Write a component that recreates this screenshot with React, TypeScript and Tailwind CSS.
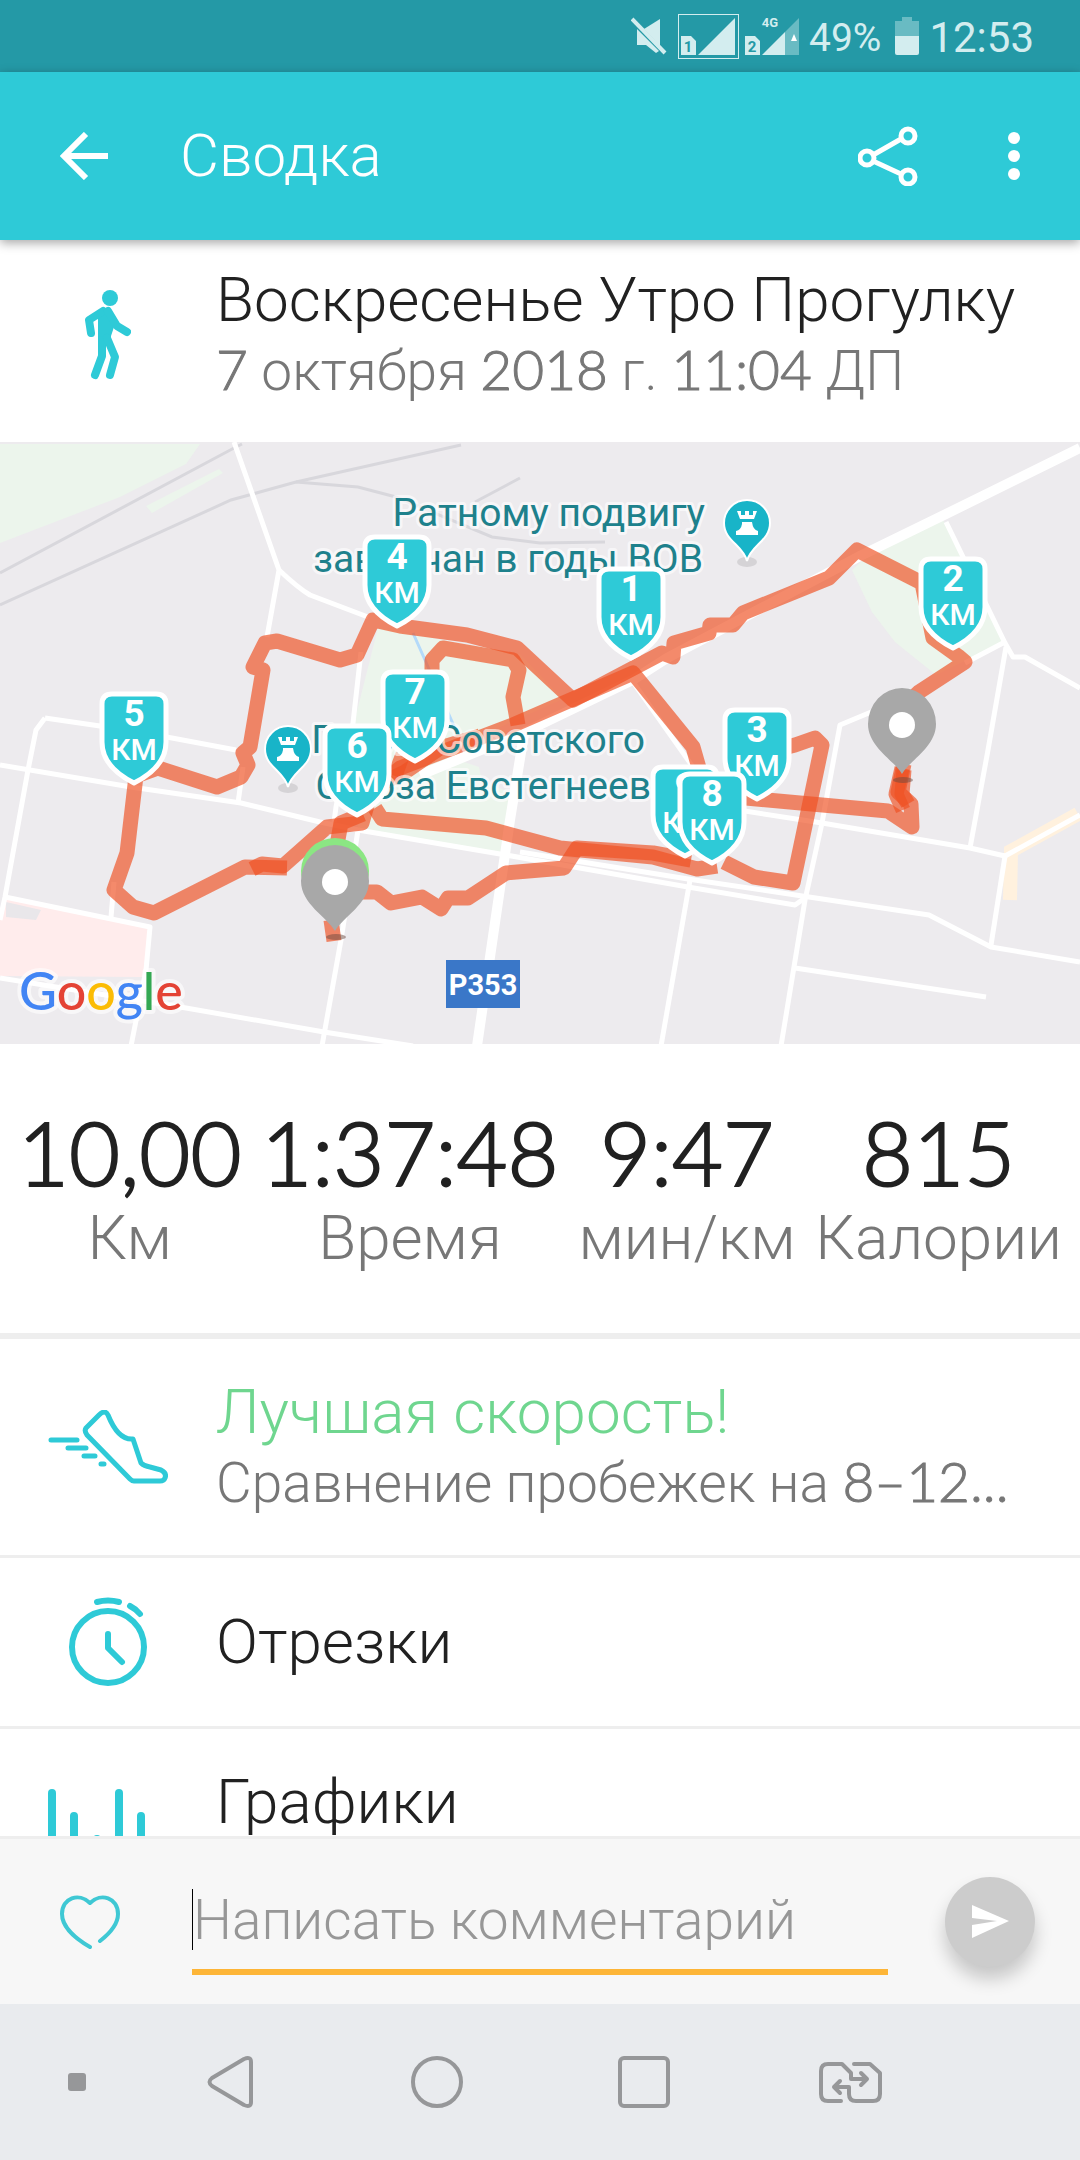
import { ReactNode } from "react";

type Marker = { label: string; x: number; y: number };

// Order matters: later shields are drawn over earlier ones
const KM_MARKERS: Marker[] = [
  { label: "1", x: 631, y: 219 },
  { label: "2", x: 953, y: 209 },
  { label: "3", x: 757, y: 360 },
  { label: "4", x: 397, y: 187 },
  { label: "5", x: 134, y: 344 },
  { label: "7", x: 415, y: 322 },
  { label: "6", x: 357, y: 376 },
  { label: "9", x: 685, y: 417 },
  { label: "8", x: 712, y: 424 },
];

const STATS = [
  { value: "10,00", label: "Км" },
  { value: "1:37:48", label: "Время" },
  { value: "9:47", label: "мин/км" },
  { value: "815", label: "Калории" },
];

const RAILS = [
  "M0 131 L234 6 L242 2",
  "M0 163 L231 58 L296 40 L461 3",
  "M296 40 L358 45 L396 55 L492 95 L540 101 L605 100",
  "M520 36 L475 60",
];

const ROADS = [
  "M234 0 L279 128 L267 195",
  "M279 128 Q298 146 310 153 L368 175",
  "M361 210 L353 281 L336 365 L334 380",
  "M358 388 L341 498 L322 604",
  "M45 276 L36 288 L28 328 L5 455 L0 478",
  "M45 276 L100 284 L172 296 L236 308",
  "M0 323 L131 345 L241 361 L320 380 L358 388 L506 413 L574 425 L688 445 L795 463 L805 456",
  "M520 410 L688 437 L809 455 L929 473 L991 505 L1080 520",
  "M243 325 L238 361",
  "M5 455 L150 485 L146 528 L131 604",
  "M114 440 L111 475",
  "M0 536 L186 566 L324 590 L413 604",
  "M633 240 L693 325 L705 350",
  "M700 362 L822 381 L970 406 L1005 414 L1080 373",
  "M690 438 L661 604",
  "M900 258 L840 283 L822 381 L805 458 L781 604",
  "M795 526 L986 555",
  "M946 80 L1005 201 L1013 215 L1025 215 L1080 246",
  "M965 221 L1003 201",
  "M1006 205 L988 308 L970 406",
  "M1005 414 L991 503",
];

const ROUTE = [
  // long outer loop
  "M898 320 L906 262 L919 250 L965 220 L958 214 L933 196 L922 141 L857 108 L829 136 L743 171 L733 183 L710 183 L709 191 L674 201 L673 215 L662 211 L573 258 L517 206 L467 193 L400 184 L373 178 L357 213 L340 218 L277 199 L265 201 L253 225 L263 228 L250 305 L243 311 L248 323 L241 335 L217 345 L158 326 L136 334 L127 411 L114 448 L133 465 L154 471 L245 425 L287 426",
  "M252 427 L262 422 L283 424 L327 385 L362 381 L368 360",
  "M368 352 L400 326 L513 283 L573 257 L633 231 L693 305 L703 340",
  "M735 355 L888 369 L912 385 L911 362 L898 350 L904 322",
  "M375 366 L382 377 L486 386 L560 406 L653 415 L697 427 L717 424",
  "M724 420 L754 435 L793 441 L809 365 L822 303 L815 296 L795 303 L760 312",
  "M362 450 L377 450 L391 461 L422 455 L441 467 L448 456 L468 456 L506 431 L564 426 L577 406 L653 411 L691 418",
  "M395 334 L400 320 L432 240 L432 218 L443 206 L513 218 L519 228 L513 255 L518 283",
  "M363 372 L341 381 L333 425",
  "M380 342 L405 330 L440 306 L480 294",
  "M331 478 L334 499",
  "M902 326 L896 352 L903 368",
  "M904 328 L902 352 L908 362",
];

const DIGITS = "font-['Lato',sans-serif] font-light leading-none [-webkit-text-stroke:1px_currentColor]";

function Shield({ label, x, y }: Marker) {
  return (
    <g transform={`translate(${x} ${y})`}>
      <path
        d="M-32 -82 Q-32 -92 -22 -92 H22 Q32 -92 32 -82 V-44 C32 -22 14 -10 0 -3 C-14 -10 -32 -22 -32 -44 Z"
        fill="#2ecad7"
        stroke="#fff"
        strokeWidth="5"
        strokeLinejoin="round"
      />
      <text y="-60" textAnchor="middle" fontSize="37" fontWeight="700" fill="#fff">
        {label}
      </text>
      <text y="-26" textAnchor="middle" fontSize="30" fontWeight="500" fill="#fff">
        КМ
      </text>
    </g>
  );
}

function CastlePin({ x, y }: { x: number; y: number }) {
  return (
    <g transform={`translate(${x} ${y})`}>
      <ellipse cx="0" cy="39" rx="10" ry="5" fill="#d5d3d6" />
      <path
        d="M0 38 C-4 22 -23 18 -23 0 A23 23 0 0 1 23 0 C23 18 4 22 0 38 Z"
        fill="#18b4c8"
        stroke="#fff"
        strokeWidth="2"
      />
      <path
        d="M-10 -12 H-6 V-8 H-2 V-12 H2 V-8 H6 V-12 H10 L7 -4 H-7 Z M-5 -1 H5 Q6 7 11 8 V12 H-11 V8 Q-6 7 -5 1 Z"
        fill="#fff"
      />
    </g>
  );
}

function EndPin({ x, y }: { x: number; y: number }) {
  return (
    <g transform={`translate(${x} ${y})`}>
      <ellipse cx="1" cy="55" rx="10" ry="3" fill="#6b4a40" fillOpacity="0.5" />
      <path
        d="M0 49 C-8 35 -34 22 -34 -1 A34 36 0 0 1 34 -1 C34 22 8 35 0 49 Z"
        fill="#a8a8a8"
      />
      <circle r="13" fill="#fff" />
    </g>
  );
}

function RouteMap() {
  return (
    <svg
      viewBox="0 0 1080 602"
      className="block w-full h-auto bg-[#edebee] font-['Roboto',sans-serif]"
      role="img"
      aria-label="Карта маршрута"
    >
      {/* land use */}
      <g fill="#ecf5ec">
        <path d="M0 2 H200 L186 22 L120 55 L0 101 Z" />
        <path d="M146 64 L219 27 L223 31 L152 71 Z" />
        <path d="M378 186 L520 212 L563 257 L440 312 L479 325 L482 340 L510 350 L500 411 L358 386 L353 285 Z" />
        <path d="M874 108 L943 78 L1003 200 L936 233 L895 200 L872 170 L852 128 Z" />
      </g>
      <path d="M0 475 L5 455 L150 485 L143 535 L0 534 Z" fill="#ffecec" />
      <path d="M6 460 L41 468 L36 478 L6 475 Z" fill="#e9e7ea" />
      <path d="M1078 372 L1011 409 L1010 458" fill="none" stroke="#fff1de" strokeWidth="14" />
      <path d="M413 191 L425 218 L457 291" fill="none" stroke="#b4dafa" strokeWidth="3" />

      <g fill="none" stroke="#d8d7dc" strokeWidth="3">
        {RAILS.map((d) => (
          <path key={d} d={d} />
        ))}
      </g>
      <g fill="none" stroke="#fff" strokeWidth="5" strokeLinejoin="round">
        {ROADS.map((d) => (
          <path key={d} d={d} />
        ))}
      </g>
      <g fill="none" stroke="#fff" strokeWidth="10">
        <path d="M420 333 L525 290 L633 238 L667 216 L860 114 L946 72 L1080 6" />
        <path d="M524 292 L510 378 L477 604" />
      </g>

      <g
        fill="none"
        stroke="#ef5023"
        strokeOpacity="0.67"
        strokeWidth="15"
        strokeLinejoin="round"
      >
        {ROUTE.map((d) => (
          <path key={d} d={d} />
        ))}
      </g>

      <g
        fill="#1e818c"
        stroke="#fff"
        strokeOpacity="0.6"
        strokeWidth="6"
        strokeLinejoin="round"
        fontSize="39"
        className="[paint-order:stroke]"
      >
        <text x="705" y="84" textAnchor="end">Ратному подвигу</text>
        <text x="703" y="130" textAnchor="end">заводчан в годы ВОВ</text>
        <text x="645" y="311" textAnchor="end">Герою Советского</text>
        <text x="651" y="357" textAnchor="end">Союза Евстегнеев</text>
      </g>

      <CastlePin x={747} y={81} />
      <CastlePin x={288} y={307} />

      <path
        d="M335 479 C327 465 301 452 301 429 A34 33 0 0 1 369 429 C369 452 343 465 335 479 Z"
        fill="#8be683"
      />
      {KM_MARKERS.map((m) => (
        <Shield key={m.label} {...m} />
      ))}
      <EndPin x={335} y={440} />
      <EndPin x={902} y={283} />

      <rect x="446" y="518" width="74" height="48" fill="#3a77c8" />
      <text x="483" y="553" textAnchor="middle" fontSize="29" fontWeight="700" fill="#fff">
        Р353
      </text>

      <text
        x="19"
        y="568"
        fontSize="52"
        fontWeight="500"
        stroke="#fff"
        strokeOpacity="0.6"
        strokeWidth="8"
        strokeLinejoin="round"
        className="font-['Lato',sans-serif] [paint-order:stroke]"
      >
        <tspan fill="#4285f4">G</tspan>
        <tspan fill="#e44335">o</tspan>
        <tspan fill="#fbbc05">o</tspan>
        <tspan fill="#4285f4">g</tspan>
        <tspan fill="#34a853">l</tspan>
        <tspan fill="#e44335">e</tspan>
      </text>
    </svg>
  );
}

function StatusBar() {
  return (
    <div className="bg-[#2499a6] text-[#d3edef] h-[72px] flex items-center justify-end pr-[46px] shrink-0">
      <svg width="36" height="38" viewBox="0 0 36 38" fill="currentColor" className="mr-[11px]">
        <path d="M6 12 L28 34 L25 36 L15 28 H6 Z" />
        <path d="M29 2 V29 L13 12 Z" />
        <path d="M1 2 L34 36" fill="none" stroke="currentColor" strokeWidth="4" />
      </svg>
      <svg width="61" height="45" viewBox="0 0 61 45" fill="currentColor" className="mr-[6px]">
        <rect x="0.5" y="0.5" width="60" height="44" fill="none" stroke="currentColor" />
        <path d="M3 22 H13 L18 27 V41 H3 Z M20 41 L57 4 V41 Z" />
        <text x="10" y="38" fontSize="15" fontWeight="700" textAnchor="middle" fill="#2499a6">
          1
        </text>
      </svg>
      <svg width="54" height="45" viewBox="0 0 54 45" fill="currentColor" className="mr-[10px]">
        <path d="M0 22 H10 L15 27 V41 H0 Z M17 41 L40 18 V41 Z" />
        <path d="M40 18 L54 4 V41 H40 Z" opacity="0.4" />
        <path d="M46 27 L49 20 L52 27 Z" fill="#fff" />
        <text x="7" y="38" fontSize="15" fontWeight="700" textAnchor="middle" fill="#2499a6">
          2
        </text>
        <text x="25" y="13" fontSize="13" fontWeight="700" textAnchor="middle">
          4G
        </text>
      </svg>
      <span className="mt-1 text-[39px] leading-none">49%</span>
      <svg width="24" height="38" viewBox="0 0 24 38" fill="currentColor" className="ml-[14px] mr-[10px]">
        <path d="M7 0 H17 V4 H24 V19 H0 V4 H7 Z" opacity="0.4" />
        <path d="M0 19 H24 V36 Q24 38 22 38 H2 Q0 38 0 36 Z" />
      </svg>
      <span className="mt-1 text-[42px] leading-none">12:53</span>
    </div>
  );
}

function Row({ icon, children }: { icon: ReactNode; children: ReactNode }) {
  return (
    <div className="flex items-center">
      <div className="w-[216px] shrink-0 flex justify-center text-[#2ecad7]">{icon}</div>
      <div className="min-w-0 flex-1 pr-[60px]">{children}</div>
    </div>
  );
}

const WalkIcon = (
  <svg width="46" height="90" viewBox="0 0 46 90" fill="none" stroke="currentColor" strokeLinecap="round" strokeLinejoin="round">
    <circle cx="25" cy="8" r="8" fill="currentColor" stroke="none" />
    <path d="M18 18 H25 L30 34 L26 46 V54 H13 V30 L12 24 Z" fill="currentColor" stroke="none" />
    <path d="M18 21 L4 30 L6 43" strokeWidth="8" />
    <path d="M23 21 L32 36 L42 42" strokeWidth="8" />
    <path d="M17 50 V66 L10 85" strokeWidth="8" />
    <path d="M22 48 L30 67 L25 85" strokeWidth="8" />
  </svg>
);

const ShoeIcon = (
  <svg width="120" height="74" viewBox="0 0 120 74" fill="none" stroke="currentColor" strokeWidth="5" strokeLinecap="round" strokeLinejoin="round">
    <path d="M38 18 L51 5 Q57 -1 60 5 C66 20 74 30 85 29 L93 53 Q96 56 102 57 L113 60 Q119 63 117 68 Q116 71 112 71 H86 Q84 71 82 69 L39 25 Q36 21 38 18 Z" />
    <path d="M3 30 H29 M20 38 H38 M36 46 H47 M53 54 H56" />
  </svg>
);

const WatchIcon = (
  <svg width="78" height="90" viewBox="0 0 78 90" fill="none" stroke="currentColor" strokeWidth="6" strokeLinecap="round" strokeLinejoin="round">
    <circle cx="39" cy="50" r="36" />
    <path d="M39 37 V51 L53 65" />
    <path d="M28 5 Q39 2 50 5 M61 9 Q67 12 71 17" />
  </svg>
);

const BarsIcon = (
  <svg width="120" height="96" viewBox="0 0 120 96" fill="none" stroke="currentColor" strokeWidth="8" strokeLinecap="round">
    <path d="M4 4 V92 M26 27 V92 M49 50 V92 M71 4 V92 M93 27 V92 M116 60 V92" />
  </svg>
);

export default function App() {
  return (
    <div className="h-screen flex flex-col bg-white text-[#212121] font-['Roboto',sans-serif] overflow-hidden">
      <StatusBar />

      <header className="relative z-10 h-[168px] shrink-0 bg-[#2ecad7] text-white flex items-center pl-[60px] pr-[54px] shadow-[0_3px_10px_rgba(0,0,0,0.35)]">
        <button aria-label="Назад">
          <svg width="48" height="48" viewBox="0 0 48 48" fill="none" stroke="currentColor" strokeWidth="6">
            <path d="M26 2 L4 24 L26 46 M4 24 H48" />
          </svg>
        </button>
        <h1 className="ml-[72px] flex-1 text-[60px] leading-[72px] font-light">Сводка</h1>
        <button aria-label="Поделиться">
          <svg width="60" height="60" viewBox="0 0 60 60" fill="none" stroke="currentColor" strokeWidth="5">
            <circle cx="9" cy="32" r="7" />
            <circle cx="50" cy="10" r="7" />
            <circle cx="50" cy="51" r="7" />
            <path d="M15 29 L43 13 M15 35 L43 48" />
          </svg>
        </button>
        <button aria-label="Ещё" className="ml-[84px]">
          <svg width="24" height="48" viewBox="0 0 24 48" fill="currentColor">
            <circle cx="12" cy="6" r="6" />
            <circle cx="12" cy="24" r="6" />
            <circle cx="12" cy="42" r="6" />
          </svg>
        </button>
      </header>

      <main className="flex-1 min-h-0 overflow-hidden">
        <section className="pt-6 pb-9">
          <Row icon={WalkIcon}>
            <h2 className="text-[62px] leading-[72px] font-light whitespace-nowrap">
              Воскресенье Утро Прогулку
            </h2>
            <p className="text-[55px] leading-[70px] font-light text-[#777] whitespace-nowrap">
              <span className={DIGITS}>7</span> октября <span className={DIGITS}>2018</span> г.{" "}
              <span className={DIGITS}>11:04</span> ДП
            </p>
          </Row>
        </section>

        <RouteMap />

        <section className="flex justify-between px-[18px] pt-[58px] pb-[59px] border-b-[6px] border-[#eee]">
          {STATS.map((s) => (
            <div key={s.label} className="text-center">
              <div className="text-[88px] leading-[100px] font-light font-['Lato',sans-serif] [-webkit-text-stroke:2px_currentColor]">
                {s.value}
              </div>
              <div className="text-[62px] leading-[72px] font-light text-[#777]">{s.label}</div>
            </div>
          ))}
        </section>

        <section className="py-[37px] border-b-[3px] border-[#eee]">
          <Row icon={ShoeIcon}>
            <h3 className="text-[62px] leading-[72px] font-light text-[#6fd68f]">
              Лучшая скорость!
            </h3>
            <p className="text-[55px] leading-[70px] font-light text-[#777] whitespace-nowrap">
              Сравнение пробежек на <span className={DIGITS}>8–12...</span>
            </p>
          </Row>
        </section>

        <section className="py-[39px] border-b-[3px] border-[#eee]">
          <Row icon={WatchIcon}>
            <h3 className="text-[62px] leading-[72px] font-light">Отрезки</h3>
          </Row>
        </section>

        <section className="py-[37px]">
          <Row icon={BarsIcon}>
            <h3 className="text-[62px] leading-[72px] font-light mb-[70px]">Графики</h3>
          </Row>
        </section>
      </main>

      <form
        className="h-[168px] shrink-0 bg-[#f7f7f7] border-t-[3px] border-[#eee] flex items-center pl-[60px] pr-[45px]"
        onSubmit={(e) => e.preventDefault()}
      >
        <button type="button" aria-label="Нравится" className="text-[#3fc8d4]">
          <svg width="60" height="54" viewBox="0 0 60 54" fill="none" stroke="currentColor" strokeWidth="4" strokeLinecap="round" strokeLinejoin="round">
            <path d="M30 52 C16 44 2 32 2 19 C2 3 19 -3 30 8 C41 -3 58 3 58 19 C58 30 49 39 40 46" />
          </svg>
        </button>
        <div className="ml-[72px] flex-1 flex items-center h-[96px] pb-2 mt-[10px] border-b-[6px] border-[#fdb537]">
          <span className="w-px h-[61px] bg-black" />
          <input
            type="text"
            aria-label="Комментарий"
            placeholder="Написать комментарий"
            className="w-full min-w-0 bg-transparent outline-none text-[55px] leading-[70px] font-light placeholder:text-[#979797]"
          />
        </div>
        <button
          type="submit"
          aria-label="Отправить"
          className="ml-[57px] size-[90px] rounded-full bg-[#ccc] flex items-center justify-center shadow-[0_12px_18px_rgba(0,0,0,0.2)]"
        >
          <svg width="37" height="33" viewBox="0 0 37 33" fill="#fff">
            <path d="M0 0 L37 16 L0 33 V20 L25 16 L0 13 Z" />
          </svg>
        </button>
      </form>

      <nav className="h-[156px] shrink-0 bg-[#e9ebee] text-[#969799] grid grid-cols-[126fr_207fr_207fr_207fr_207fr_126fr] items-center justify-items-center">
        <button aria-label="Скрыть панель" className="ml-7 size-[18px] rounded-[3px] bg-current" />
        <button aria-label="Назад">
          <svg width="46" height="52" viewBox="0 0 46 52" fill="none" stroke="currentColor" strokeWidth="4" strokeLinejoin="round">
            <path d="M37 3 Q44 0 44 6 V46 Q44 52 37 49 L5 30 Q0 26 5 22 Z" />
          </svg>
        </button>
        <button aria-label="Домой">
          <svg width="52" height="52" viewBox="0 0 52 52" fill="none" stroke="currentColor" strokeWidth="4">
            <circle cx="26" cy="26" r="24" />
          </svg>
        </button>
        <button aria-label="Недавние">
          <svg width="52" height="52" viewBox="0 0 52 52" fill="none" stroke="currentColor" strokeWidth="4">
            <rect x="2" y="2" width="48" height="48" rx="4" />
          </svg>
        </button>
        <button aria-label="Сменить SIM">
          <svg width="63" height="41" viewBox="0 0 63 41" fill="none" stroke="currentColor" strokeWidth="4" strokeLinecap="round" strokeLinejoin="round">
            <path d="M22 39 H9 Q2 39 2 32 V9 Q2 2 9 2 H23 L32 11 V17 H48 M42 11 L48 17 L42 23" />
            <path d="M35 2 H51 L61 11 V32 Q61 39 54 39 H37 Q30 39 30 32 V25 H15 M21 19 L15 25 L21 31" />
          </svg>
        </button>
      </nav>
    </div>
  );
}
